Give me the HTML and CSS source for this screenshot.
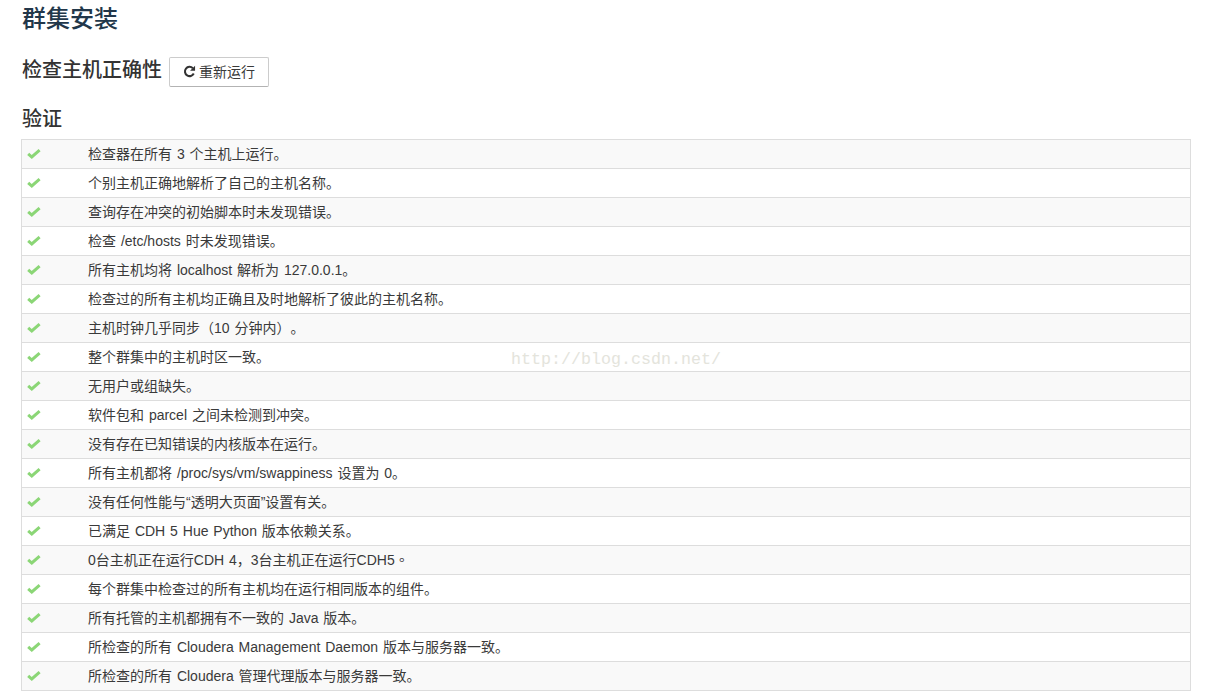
FILE: index.html
```html
<!DOCTYPE html>
<html lang="zh-CN">
<head>
<meta charset="utf-8">
<title>群集安装</title>
<link rel="stylesheet" href="styles.css">
</head>
<body>
<div class="page">
  <h1 class="title">群集安装</h1>
  <div class="subhead">
    <h2 class="sub-title">检查主机正确性</h2>
    <button class="btn" type="button">
      <svg class="btn-icon" viewBox="0 0 14 14" aria-hidden="true"><path d="M11.6 9.2A5 5 0 1 1 10.6 3.4" fill="none" stroke="#333" stroke-width="2.2"/><path d="M13 .8v5.4H7.6z" fill="#333"/></svg>重新运行
    </button>
  </div>
  <h3 class="section-title">验证</h3>
  <div class="checks">
    <div class="row"><svg class="tick" viewBox="0 0 14 10" aria-hidden="true"><path d="M1.2 4.8l3.6 3.2 7.8-6.8" fill="none" stroke="#8bd676" stroke-width="3"/></svg><span class="msg">检查器在所有 3 个主机上运行<span class="stop">。</span></span></div>
    <div class="row"><svg class="tick" viewBox="0 0 14 10" aria-hidden="true"><path d="M1.2 4.8l3.6 3.2 7.8-6.8" fill="none" stroke="#8bd676" stroke-width="3"/></svg><span class="msg">个别主机正确地解析了自己的主机名称<span class="stop">。</span></span></div>
    <div class="row"><svg class="tick" viewBox="0 0 14 10" aria-hidden="true"><path d="M1.2 4.8l3.6 3.2 7.8-6.8" fill="none" stroke="#8bd676" stroke-width="3"/></svg><span class="msg">查询存在冲突的初始脚本时未发现错误<span class="stop">。</span></span></div>
    <div class="row"><svg class="tick" viewBox="0 0 14 10" aria-hidden="true"><path d="M1.2 4.8l3.6 3.2 7.8-6.8" fill="none" stroke="#8bd676" stroke-width="3"/></svg><span class="msg">检查 /etc/hosts 时未发现错误<span class="stop">。</span></span></div>
    <div class="row"><svg class="tick" viewBox="0 0 14 10" aria-hidden="true"><path d="M1.2 4.8l3.6 3.2 7.8-6.8" fill="none" stroke="#8bd676" stroke-width="3"/></svg><span class="msg">所有主机均将 localhost 解析为 127.0.0.1<span class="stop">。</span></span></div>
    <div class="row"><svg class="tick" viewBox="0 0 14 10" aria-hidden="true"><path d="M1.2 4.8l3.6 3.2 7.8-6.8" fill="none" stroke="#8bd676" stroke-width="3"/></svg><span class="msg">检查过的所有主机均正确且及时地解析了彼此的主机名称<span class="stop">。</span></span></div>
    <div class="row"><svg class="tick" viewBox="0 0 14 10" aria-hidden="true"><path d="M1.2 4.8l3.6 3.2 7.8-6.8" fill="none" stroke="#8bd676" stroke-width="3"/></svg><span class="msg">主机时钟几乎同步（10 分钟内）<span class="stop">。</span></span></div>
    <div class="row"><svg class="tick" viewBox="0 0 14 10" aria-hidden="true"><path d="M1.2 4.8l3.6 3.2 7.8-6.8" fill="none" stroke="#8bd676" stroke-width="3"/></svg><span class="msg">整个群集中的主机时区一致<span class="stop">。</span></span><span class="watermark">http://blog.csdn.net/</span></div>
    <div class="row"><svg class="tick" viewBox="0 0 14 10" aria-hidden="true"><path d="M1.2 4.8l3.6 3.2 7.8-6.8" fill="none" stroke="#8bd676" stroke-width="3"/></svg><span class="msg">无用户或组缺失<span class="stop">。</span></span></div>
    <div class="row"><svg class="tick" viewBox="0 0 14 10" aria-hidden="true"><path d="M1.2 4.8l3.6 3.2 7.8-6.8" fill="none" stroke="#8bd676" stroke-width="3"/></svg><span class="msg">软件包和 parcel 之间未检测到冲突<span class="stop">。</span></span></div>
    <div class="row"><svg class="tick" viewBox="0 0 14 10" aria-hidden="true"><path d="M1.2 4.8l3.6 3.2 7.8-6.8" fill="none" stroke="#8bd676" stroke-width="3"/></svg><span class="msg">没有存在已知错误的内核版本在运行<span class="stop">。</span></span></div>
    <div class="row"><svg class="tick" viewBox="0 0 14 10" aria-hidden="true"><path d="M1.2 4.8l3.6 3.2 7.8-6.8" fill="none" stroke="#8bd676" stroke-width="3"/></svg><span class="msg">所有主机都将 /proc/sys/vm/swappiness 设置为 0<span class="stop">。</span></span></div>
    <div class="row"><svg class="tick" viewBox="0 0 14 10" aria-hidden="true"><path d="M1.2 4.8l3.6 3.2 7.8-6.8" fill="none" stroke="#8bd676" stroke-width="3"/></svg><span class="msg">没有任何性能与“透明大页面”设置有关<span class="stop">。</span></span></div>
    <div class="row"><svg class="tick" viewBox="0 0 14 10" aria-hidden="true"><path d="M1.2 4.8l3.6 3.2 7.8-6.8" fill="none" stroke="#8bd676" stroke-width="3"/></svg><span class="msg">已满足 CDH 5 Hue Python 版本依赖关系<span class="stop">。</span></span></div>
    <div class="row"><svg class="tick" viewBox="0 0 14 10" aria-hidden="true"><path d="M1.2 4.8l3.6 3.2 7.8-6.8" fill="none" stroke="#8bd676" stroke-width="3"/></svg><span class="msg">0台主机正在运行CDH 4，3台主机正在运行CDH5<span class="stop">。</span></span></div>
    <div class="row"><svg class="tick" viewBox="0 0 14 10" aria-hidden="true"><path d="M1.2 4.8l3.6 3.2 7.8-6.8" fill="none" stroke="#8bd676" stroke-width="3"/></svg><span class="msg">每个群集中检查过的所有主机均在运行相同版本的组件<span class="stop">。</span></span></div>
    <div class="row"><svg class="tick" viewBox="0 0 14 10" aria-hidden="true"><path d="M1.2 4.8l3.6 3.2 7.8-6.8" fill="none" stroke="#8bd676" stroke-width="3"/></svg><span class="msg">所有托管的主机都拥有不一致的 Java 版本<span class="stop">。</span></span></div>
    <div class="row"><svg class="tick" viewBox="0 0 14 10" aria-hidden="true"><path d="M1.2 4.8l3.6 3.2 7.8-6.8" fill="none" stroke="#8bd676" stroke-width="3"/></svg><span class="msg">所检查的所有 Cloudera Management Daemon 版本与服务器一致<span class="stop">。</span></span></div>
    <div class="row"><svg class="tick" viewBox="0 0 14 10" aria-hidden="true"><path d="M1.2 4.8l3.6 3.2 7.8-6.8" fill="none" stroke="#8bd676" stroke-width="3"/></svg><span class="msg">所检查的所有 Cloudera 管理代理版本与服务器一致<span class="stop">。</span></span></div>
  </div>
</div>
</body>
</html>
```
FILE: styles.css
```css
html, body {
  margin: 0;
  padding: 0;
  background: #fff;
  height: 696px;
  overflow: hidden;
}
body {
  font-family: "Liberation Sans", "Noto Sans CJK SC", sans-serif;
  font-size: 14px;
  color: #3a3a3a;
  text-spacing-trim: space-all;
}
.page {
  padding: 5px 22px 0 21px;
}
.title, .sub-title, .section-title {
  margin: 0;
  font-family: "Liberation Serif", "Noto Sans CJK SC", serif;
  color: #333;
  font-weight: 500;
}
.title {
  font-size: 24px;
  line-height: 28px;
  color: #22374a;
  margin-left: 1px;
}
.subhead {
  display: flex;
  align-items: center;
  gap: 7px;
  margin-top: 24px;
  margin-left: 1px;
}
.sub-title {
  font-size: 20px;
  line-height: 26px;
  margin-bottom: 4px;
}
.btn {
  display: flex;
  align-items: center;
  justify-content: center;
  width: 100px;
  height: 30px;
  padding: 0 0 2px;
  background: #fff;
  border: 1px solid #ccc;
  border-bottom-color: #b3b3b3;
  border-radius: 2px;
  font: inherit;
  color: #3a3a3a;
  gap: 3px;
}
.btn-icon {
  width: 13px;
  height: 13px;
}
.section-title {
  font-size: 20px;
  line-height: 24px;
  margin-top: 20px;
  margin-left: 1px;
  margin-bottom: 8px;
}
.checks {
  border: 1px solid #ddd;
  border-bottom: 0;
}
.row {
  position: relative;
  display: flex;
  align-items: center;
  height: 28px;
  border-bottom: 1px solid #ddd;
  padding-left: 5px;
  background: #fff;
}
.row:nth-child(odd) {
  background: #f9f9f9;
}
.tick {
  width: 14px;
  height: 10px;
  flex: none;
}
.msg {
  margin-left: 47px;
  line-height: 20px;
  word-spacing: 1px;
}
.stop {
  font-family: "Noto Sans CJK TC", sans-serif;
  line-height: 1;
}
.watermark {
  position: absolute;
  left: 489px;
  top: 7px;
  font-family: "Liberation Mono", monospace;
  font-size: 16.67px;
  line-height: 20px;
  color: #e4e4dc;
}
```
